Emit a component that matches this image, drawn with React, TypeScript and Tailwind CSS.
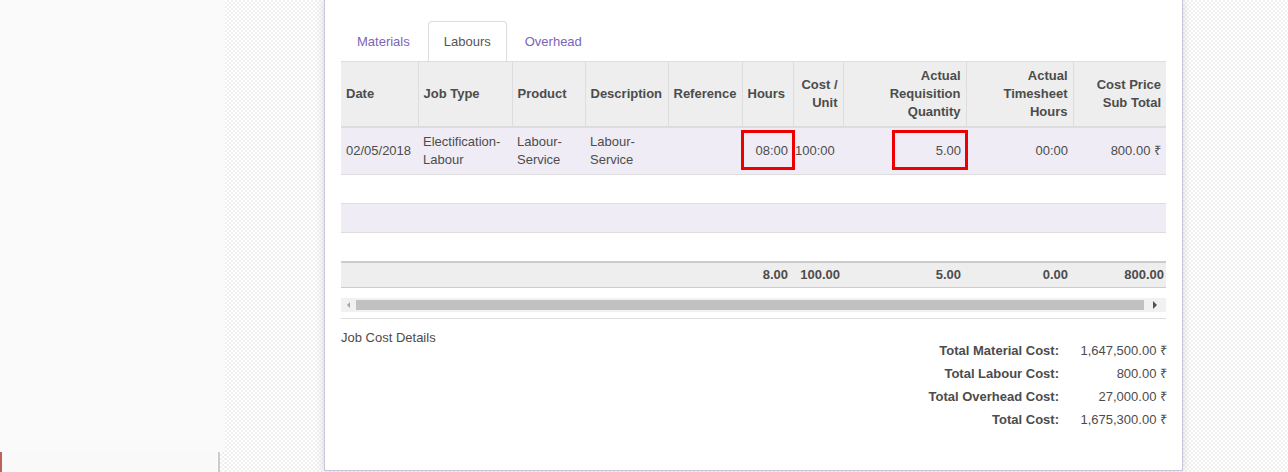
import React from "react";

type Row = {
  date: string;
  jobType: string;
  product: string;
  description: string;
  reference: string;
  hours: string;
  costUnit: string;
  reqQty: string;
  timesheet: string;
  subTotal: string;
};

const rows: Row[] = [
  {
    date: "02/05/2018",
    jobType: "Electification-Labour",
    product: "Labour-Service",
    description: "Labour-Service",
    reference: "",
    hours: "08:00",
    costUnit: "100:00",
    reqQty: "5.00",
    timesheet: "00:00",
    subTotal: "800.00 ₹",
  },
];

const widths = [77, 94, 73, 83, 74, 51, 50, 123, 107, 93];

const th = "border-r border-[#dddddd] px-[5px] py-[5px] align-middle font-bold leading-[18px] last:border-r-0";
const td = "px-[5px] py-[5px] align-middle leading-[18px]";

const Tabs = () => (
  <div className="flex h-[40px] items-end">
    <div className="mr-[2px] flex h-[39px] items-center px-4 text-[#7c64b6]">Materials</div>
    <div className="mr-[2px] flex h-[40px] items-center rounded-t-[4px] border border-b-0 border-[#dddddd] bg-white px-[15px] text-[#555555]">
      Labours
    </div>
    <div className="flex h-[39px] items-center px-4 text-[#7c64b6]">Overhead</div>
  </div>
);

const Marked = ({ children, left }: { children: React.ReactNode; left: string }) => (
  <div className="relative">
    {children}
    <div className={`pointer-events-none absolute top-[-12px] right-[-7px] bottom-[-10px] border-[3px] border-[#ee0000] ${left}`} />
  </div>
);

const Scrollbar = () => (
  <div className="mt-[10px] flex h-[14px] items-center bg-[#f1f1f1]">
    <div className="flex w-[15px] justify-center">
      <div className="h-0 w-0 border-y-[3px] border-r-[3px] border-y-transparent border-r-[#a3a3a3]" />
    </div>
    <div className="h-[10px] flex-1 bg-[#c1c1c1]" />
    <div className="flex w-[22px] justify-center">
      <div className="h-0 w-0 border-y-[4px] border-l-[4px] border-y-transparent border-l-[#505050]" />
    </div>
  </div>
);

const totals: [string, string][] = [
  ["Total Material Cost:", "1,647,500.00 ₹"],
  ["Total Labour Cost:", "800.00 ₹"],
  ["Total Overhead Cost:", "27,000.00 ₹"],
  ["Total Cost:", "1,675,300.00 ₹"],
];

export default function App() {
  return (
    <div className="flex h-[472px] w-[1288px] overflow-hidden font-['Liberation_Sans',Arial,sans-serif] text-[13px] text-[#4c4c4c]">
      <aside className="flex w-[225px] flex-col bg-[repeating-conic-gradient(#f0f0f0_0_25%,#ffffff_0_50%)] bg-[length:4px_4px]">
        <div className="flex-1 bg-[#fafafa]" />
        <div className="h-[20px] w-[220px] border-r-2 border-l-2 border-r-[#cccccc] border-l-[#c0605a] bg-[#f9f9f9]" />
      </aside>

      <main className="flex-1 bg-[repeating-conic-gradient(#f0f0f0_0_25%,#ffffff_0_50%)] bg-[length:4px_4px]">
        <div className="ml-[99px] h-[471px] w-[859px] border-x border-b border-[#cac6da] bg-white px-4 pt-[21px] shadow-[0_0_8px_rgba(120,110,150,0.25)]">
          <Tabs />

          <table className="w-[825px] table-fixed border-collapse">
            <colgroup>
              {widths.map((w, i) => (
                <col key={i} style={{ width: w }} />
              ))}
            </colgroup>
            <thead>
              <tr className="border-t border-b-2 border-[#dddddd] bg-[#eeeeee]">
                <th className={`${th} text-left`}>Date</th>
                <th className={`${th} text-left`}>Job Type</th>
                <th className={`${th} text-left`}>Product</th>
                <th className={`${th} text-left`}>Description</th>
                <th className={`${th} text-left`}>Reference</th>
                <th className={`${th} text-left`}>Hours</th>
                <th className={`${th} text-right`}>
                  Cost /<br />Unit
                </th>
                <th className={`${th} text-right`}>
                  Actual<br />Requisition<br />Quantity
                </th>
                <th className={`${th} text-right`}>
                  Actual<br />Timesheet<br />Hours
                </th>
                <th className={`${th} text-right`}>
                  Cost Price<br />Sub Total
                </th>
              </tr>
            </thead>
            <tbody>
              {rows.map((r) => (
                <tr key={r.date} className="border-b border-[#dddddd] bg-[#efecf6]">
                  <td className={td}>{r.date}</td>
                  <td className={td}>
                    Electification-
                    <br />
                    Labour
                  </td>
                  <td className={td}>
                    Labour-
                    <br />
                    Service
                  </td>
                  <td className={td}>
                    Labour-
                    <br />
                    Service
                  </td>
                  <td className={td}>{r.reference}</td>
                  <td className={`${td} text-right`}>
                    <Marked left="left-[-6px]">{r.hours}</Marked>
                  </td>
                  <td className="py-[5px] pl-[2px] align-middle leading-[18px]">{r.costUnit}</td>
                  <td className={`${td} text-right`}>
                    <Marked left="left-[44px]">{r.reqQty}</Marked>
                  </td>
                  <td className={`${td} text-right`}>{r.timesheet}</td>
                  <td className={`${td} text-right`}>{r.subTotal}</td>
                </tr>
              ))}
              <tr className="border-b border-[#dddddd]">
                <td className={td} colSpan={10}>&nbsp;</td>
              </tr>
              <tr className="border-b border-[#dddddd] bg-[#efecf6]">
                <td className={td} colSpan={10}>&nbsp;</td>
              </tr>
              <tr>
                <td className={td} colSpan={10}>&nbsp;</td>
              </tr>
            </tbody>
            <tfoot>
              <tr className="border-t-2 border-b border-[#cccccc] bg-[#eeeeee] font-bold">
                <td className="py-[3px] leading-[18px]" colSpan={5} />
                <td className="px-[5px] py-[3px] text-right leading-[18px]">8.00</td>
                <td className="px-[3px] py-[3px] text-right leading-[18px]">100.00</td>
                <td className="px-[5px] py-[3px] text-right leading-[18px]">5.00</td>
                <td className="px-[5px] py-[3px] text-right leading-[18px]">0.00</td>
                <td className="py-[3px] pr-[2px] text-right leading-[18px]">800.00</td>
              </tr>
            </tfoot>
          </table>

          <Scrollbar />
          <div className="mt-[6px] border-t border-[#dddddd]" />

          <div className="flex items-start justify-between pt-[10px]">
            <div className="leading-[18px]">Job Cost Details</div>
            <div className="mt-[10px] mr-[-1px] grid grid-cols-[auto_108px]">
              {totals.map(([label, value]) => (
                <React.Fragment key={label}>
                  <div className="flex h-[23px] items-center justify-end font-bold">{label}</div>
                  <div className="flex h-[23px] items-center justify-end">{value}</div>
                </React.Fragment>
              ))}
            </div>
          </div>
        </div>
      </main>
    </div>
  );
}
